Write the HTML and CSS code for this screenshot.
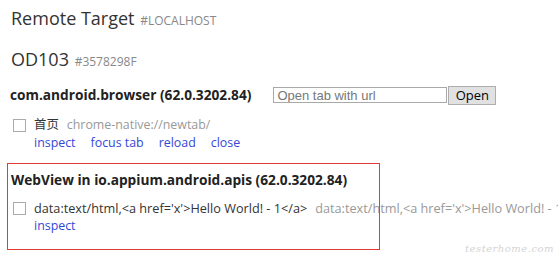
FILE: index.html
```html
<!DOCTYPE html>
<html>
<head>
<meta charset="utf-8">
<link rel="stylesheet" href="styles.css">
</head>
<body>
<div class="page">
  <div class="heading">Remote Target <span class="sub">#LOCALHOST</span></div>
  <div class="heading device">OD103 <span class="sub">#3578298F</span></div>

  <div class="browser">
    <div class="browser-head">
      <span class="browser-name">com.android.browser (62.0.3202.84)</span>
      <input class="open-input" type="text" placeholder="Open tab with url">
      <button class="open-btn">Open</button>
    </div>
    <div class="target">
      <span class="check"></span>
      <span class="name">首页</span>
      <span class="url">chrome-native://newtab/</span>
    </div>
    <div class="actions"><span class="action">inspect</span><span class="action">focus tab</span><span class="action">reload</span><span class="action">close</span></div>
  </div>

  <div class="browser webview">
    <div class="browser-head">
      <span class="browser-name">WebView in io.appium.android.apis (62.0.3202.84)</span>
    </div>
    <div class="target">
      <span class="check"></span>
      <span class="name">data:text/html,&lt;a href='x'&gt;Hello World! - 1&lt;/a&gt;</span>
      <span class="url">data:text/html,&lt;a href='x'&gt;Hello World! - 1&lt;/a&gt;</span>
    </div>
    <div class="actions"><span class="action">inspect</span></div>
  </div>
</div>
<div class="watermark">testerhome.com</div>
</body>
</html>
```
FILE: styles.css
```css
html, body {
  margin: 0;
  padding: 0;
  overflow: hidden;
  background: #fff;
}
body {
  font-family: "Open Sans", "Noto Sans CJK SC", sans-serif;
  color: #333;
  width: 558px;
  height: 264px;
  position: relative;
}
.page {
  padding: 6px 0 0 7px;
}
.heading {
  font-size: 18px;
  line-height: 24px;
  padding-left: 4px;
  color: #333;
  white-space: nowrap;
}
.heading .sub {
  font-size: 12px;
  color: #888;
  margin-left: 1px;
}
.device {
  margin-top: 14px;
}
.browser {
  padding-left: 3px;
  margin-top: 11px;
}
.browser-head {
  display: flex;
  align-items: center;
  height: 20px;
  white-space: nowrap;
}
.browser-name {
  font-weight: bold;
  font-size: 13.7px;
  line-height: 20px;
  color: #222;
}
.open-input {
  margin: 0 0 0 22px;
  width: 174px;
  height: 16px;
  box-sizing: border-box;
  border: 1px solid #a9a9a9;
  padding: 0 3px;
  font-family: "Liberation Sans", sans-serif;
  font-size: 13px;
  line-height: 14px;
}
.open-input::placeholder {
  color: #777;
}
.open-btn {
  margin: 0 0 0 1px;
  width: 48px;
  height: 19px;
  box-sizing: border-box;
  border: 1px solid #adadad;
  background: #e1e1e1;
  padding: 0;
  font-family: "Open Sans", sans-serif;
  font-size: 13px;
  line-height: 17px;
  color: #000;
}
.target {
  display: flex;
  align-items: center;
  margin-top: 12px;
  height: 16px;
  font-size: 12.4px;
  line-height: 16px;
  white-space: nowrap;
}
.check {
  width: 13px;
  height: 13px;
  box-sizing: border-box;
  border: 1px solid #aaa;
  margin-left: 3px;
  margin-right: 8px;
  flex: none;
}
.name {
  color: #333;
}
.url {
  color: #999;
  margin-left: 8px;
}
.actions {
  padding-left: 24px;
  margin-top: 2px;
  font-size: 12.4px;
  line-height: 16px;
  white-space: nowrap;
}
.action {
  color: #3448d6;
  margin-right: 15px;
}
.webview {
  width: 373px;
  box-sizing: border-box;
  border: 0;
  box-shadow: inset 0 0 0 1px #e53935;
  padding: 7px 0 16px 4px;
  margin-top: 12px;
}
.webview .target {
  margin-top: 10px;
  font-size: 12.7px;
}
.webview .check {
  margin-left: 2px;
}
.webview .actions {
  padding-left: 23px;
  margin-top: 2px;
}
.watermark {
  position: absolute;
  right: 4px;
  bottom: 10px;
  font-family: "DejaVu Serif", serif;
  font-style: italic;
  font-size: 10px;
  color: #d4d4d4;
  letter-spacing: 0.5px;
}
```
